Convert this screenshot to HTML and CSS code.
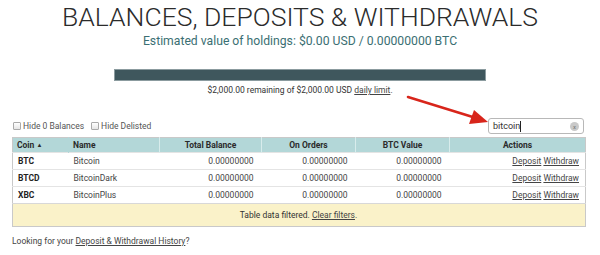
FILE: index.html
```html
<!DOCTYPE html>
<html lang="en">
<head>
  <meta charset="UTF-8">
  <title>Balances, Deposits &amp; Withdrawals</title>
  <link rel="stylesheet" href="styles.css">
</head>
<body>

  <header class="page-head">
    <h1>BALANCES, DEPOSITS &amp; WITHDRAWALS</h1>
    <p class="estimate">Estimated value of holdings: $0.00 USD / 0.00000000 BTC</p>
  </header>

  <section class="limit">
    <div class="limit-bar"><div class="limit-fill"></div></div>
    <p class="limit-text">$2,000.00 remaining of $2,000.00 USD <a href="#">daily limit</a>.</p>
  </section>

  <main class="balances">
    <div class="toolbar">
      <label class="check"><span class="box"></span>Hide 0 Balances</label>
      <label class="check"><span class="box"></span>Hide Delisted</label>
      <div class="search">
        <span class="search-value">bitcoin</span><span class="caret"></span>
        <span class="clear">x</span>
      </div>
    </div>

    <table>
      <thead>
        <tr>
          <th class="col-coin">Coin <span class="sort">&#9650;</span></th>
          <th class="col-name">Name</th>
          <th class="col-num">Total Balance</th>
          <th class="col-num">On Orders</th>
          <th class="col-num">BTC Value</th>
          <th class="col-act">Actions</th>
        </tr>
      </thead>
      <tbody>
        <tr>
          <td class="coin">BTC</td>
          <td>Bitcoin</td>
          <td class="num">0.00000000</td>
          <td class="num">0.00000000</td>
          <td class="num">0.00000000</td>
          <td class="act"><a href="#">Deposit</a> <a href="#">Withdraw</a></td>
        </tr>
        <tr>
          <td class="coin">BTCD</td>
          <td>BitcoinDark</td>
          <td class="num">0.00000000</td>
          <td class="num">0.00000000</td>
          <td class="num">0.00000000</td>
          <td class="act"><a href="#">Deposit</a> <a href="#">Withdraw</a></td>
        </tr>
        <tr>
          <td class="coin">XBC</td>
          <td>BitcoinPlus</td>
          <td class="num">0.00000000</td>
          <td class="num">0.00000000</td>
          <td class="num">0.00000000</td>
          <td class="act"><a href="#">Deposit</a> <a href="#">Withdraw</a></td>
        </tr>
        <tr class="filtered">
          <td colspan="6">Table data filtered. <a href="#">Clear filters</a>.</td>
        </tr>
      </tbody>
    </table>

    <p class="history">Looking for your <a href="#">Deposit &amp; Withdrawal History</a>?</p>
  </main>

  <svg class="arrow" width="600" height="255" viewBox="0 0 600 255">
    <line x1="408" y1="97" x2="476" y2="118" stroke="#d8251b" stroke-width="2.6" stroke-linecap="round"/>
    <polygon points="488,122 469,124 474,110" fill="#d8251b"/>
  </svg>

</body>
</html>
```

FILE: styles.css
```css
* {
  box-sizing: border-box;
}

body {
  font-family: Roboto, 'Liberation Sans', sans-serif;
  background: #fff;
  color: #333;
  margin: 0;
  padding: 0;
  position: relative;
  height: 255px;
  overflow: hidden;
}

a {
  color: #444;
  text-decoration: underline;
}

.page-head {
  text-align: center;
}

.page-head h1 {
  font-weight: 300;
  font-size: 26.5px;
  line-height: 33px;
  margin: 0;
  color: #2b2b2b;
}

.estimate {
  font-size: 12.2px;
  line-height: 16px;
  margin: 0;
  color: #3b6f73;
}

.limit {
  margin-top: 20px;
  text-align: center;
}

.limit-bar {
  width: 372px;
  height: 12px;
  margin: 0 auto;
  border: 1px solid #8b9b9f;
  background: #3f575d;
}

.limit-text {
  font-size: 8.5px;
  line-height: 12px;
  margin: 3px 0 0;
  color: #333;
}

.balances {
  padding: 0 15px 0 12px;
}

.toolbar {
  display: flex;
  align-items: center;
  height: 16px;
  margin-top: 22px;
  font-size: 8.5px;
  color: #555;
}

.check {
  display: flex;
  align-items: center;
  margin-right: 6px;
}

.check .box {
  width: 8px;
  height: 8px;
  margin: 0 2px 0 1px;
  border: 1px solid #aaa;
  border-radius: 1px;
  background: linear-gradient(#fff, #e6e6e6);
}

.search {
  margin-left: auto;
  width: 96px;
  height: 16px;
  margin-right: 1px;
  border: 1px solid #b8b8b8;
  border-radius: 3px;
  display: flex;
  align-items: center;
  padding: 0 4px;
  font-size: 9px;
  color: #333;
}

.caret {
  width: 1px;
  height: 11px;
  background: #222;
}

.clear {
  margin-left: auto;
  width: 9px;
  height: 9px;
  border-radius: 50%;
  background: #c9c9c9;
  color: #777;
  font-size: 6px;
  line-height: 9px;
  text-align: center;
}

table {
  width: 573px;
  margin-top: 3px;
  border-collapse: collapse;
  border: 1px solid #c9c9c9;
  font-size: 8.5px;
  table-layout: fixed;
}

th {
  background: #b3d7d8;
  color: #2b2b2b;
  font-weight: 700;
  height: 15px;
  padding: 0 4px;
  border-left: 1px solid #d8ecec;
  text-align: center;
}

th:first-child {
  border-left: none;
}

.col-coin { width: 56px; text-align: left; }
.col-name { width: 91px; text-align: left; border-left-color: #b3d7d8; }
.col-num { width: 94px; }
.col-act { width: 136px; }

.col-num:nth-child(3) {
  width: 102px;
}

.sort {
  font-size: 6px;
  vertical-align: 1px;
}

td {
  height: 17px;
  padding: 0 6px 0 5px;
  border-top: 1px solid #e4e4e4;
  color: #444;
}

td.coin {
  font-weight: 700;
  color: #222;
}

td.num {
  text-align: right;
  padding-right: 8px;
}

td.act {
  text-align: right;
  padding-right: 6px;
}

.filtered td {
  height: 23px;
  background: #faf2c9;
  text-align: center;
  border-top: 1px solid #d8d8d8;
  color: #333;
}

.history {
  font-size: 8.5px;
  margin: 9px 0 0;
  color: #444;
}

.arrow {
  position: absolute;
  left: 0;
  top: 0;
  pointer-events: none;
}
```
